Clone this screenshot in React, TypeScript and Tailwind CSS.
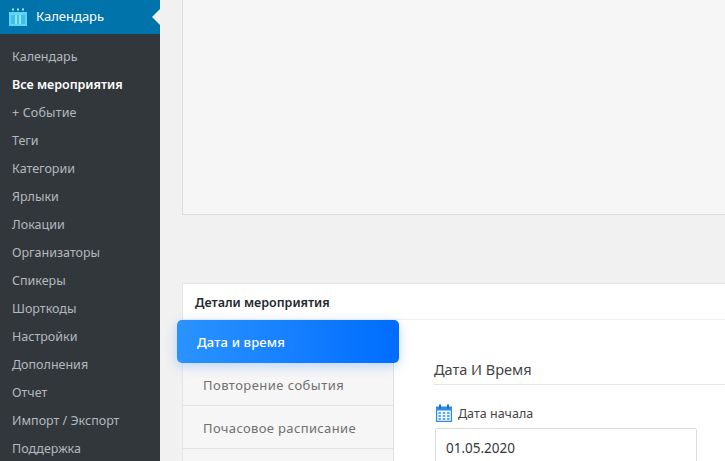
const items = ["Календарь","Все мероприятия","+ Событие","Теги","Категории","Ярлыки","Локации","Организаторы","Спикеры","Шорткоды","Настройки","Дополнения","Отчет","Импорт / Экспорт","Поддержка"];

export default function App() {
  return (
    <div className="flex h-[461px] w-[725px] overflow-hidden bg-[#f1f1f1] font-['Noto_Sans','Open_Sans',sans-serif]">
      <aside className="w-[160px] shrink-0 bg-[#32373c]">
        <div className="relative flex h-[34px] items-center bg-[#0073aa] pl-[9px] text-[13px] text-white">
          <svg width="18" height="18" viewBox="0 0 18 18" className="mr-[9px]">
            <path d="M0 4h18v14H0z" fill="#5fd4f4" />
            <path d="M3 0.5h2v2H3zM8 0.5h2v2H8zM13 0.5h2v2h-2z" fill="#a8e6f8" />
            <path d="M2 7h14v9H2z" fill="#3fbfe6" />
            <path d="M6 7h2v9H6zM10 7h2v9h-2z" fill="#8fe2f8" />
          </svg>
          <span>Календарь</span>
          <div className="absolute right-0 top-[9px] h-0 w-0 border-y-[8px] border-r-[8px] border-y-transparent border-r-[#f1f1f1]" />
        </div>
        <ul className="pt-[9px]">
          {items.map((t, i) => (
            <li key={i} className={`flex h-[28px] items-center whitespace-pre pl-[12px] text-[12.5px] ${i === 1 ? "font-semibold text-white" : "text-[#b4b9be]"} ${i === 2 ? "tracking-[0.15px]" : ""}`}>{t}</li>
          ))}
        </ul>
      </aside>
      <main className="min-w-0 flex-1 pl-[22px]">
        <div className="h-[215px] border-b border-l border-[#dcdcdc] bg-[#f6f6f6]" />
        <section className="mt-[68px] h-[300px] border-l border-t border-[#e5e5e5] bg-white">
          <div className="flex h-[36px] items-center border-b border-[#f0f0f0] pl-[12px] pt-[3px] text-[12.5px] font-semibold text-[#23282d]">Детали мероприятия</div>
          <div className="flex">
            <div className="w-[211px] shrink-0 border-r border-[#e2e2e2] bg-[#f6f6f6]">
              <div className="relative z-10 -ml-[6px] -mr-[6px] flex h-[43px] items-center rounded-[5px] bg-gradient-to-r from-[#2a93ff] to-[#006cff] pl-[20px] pt-[3px] text-[13px] font-medium tracking-[0.15px] text-white shadow-[0_3px_12px_rgba(0,108,255,0.25)]">Дата и время</div>
              <div className="flex h-[43px] items-center border-b border-[#e2e2e2] pl-[20px] pt-[3px] text-[13px] tracking-[0.45px] text-[#707070]">Повторение события</div>
              <div className="flex h-[43px] items-center border-b border-[#e2e2e2] pl-[20px] pt-[3px] text-[13px] tracking-[0.35px] text-[#707070]">Почасовое расписание</div>
              <div className="h-[43px]" />
            </div>
            <div className="min-w-0 flex-1 pl-[40px] pt-[37px]">
              <div className="flex h-[28px] items-start border-b border-[#e6e6e6] text-[14.5px] leading-[25px] text-[#444]">Дата И Время</div>
              <div className="mt-[19px] flex h-[18px] items-center pl-[2px] text-[12.5px] text-[#444]">
                <svg width="16" height="18" viewBox="0 0 16 18" className="mr-[6px] shrink-0">
                  <path d="M0 2.5h16V18H0z" fill="#2f8fe8" />
                  <path d="M1.2 6.5h13.6v10.3H1.2z" fill="#f0f7fe" />
                  <path d="M3 0.5h2v4H3zM11 0.5h2v4h-2z" fill="#1a6fc4" />
                  <path d="M2.5 8h2.4v2H2.5zM6.8 8h2.4v2H6.8zM11.1 8h2.4v2h-2.4zM2.5 11h2.4v2H2.5zM6.8 11h2.4v2H6.8zM11.1 11h2.4v2h-2.4zM2.5 14h2.4v2H2.5zM6.8 14h2.4v2H6.8zM11.1 14h2.4v2h-2.4z" fill="#5aa8ee" />
                </svg>
                <span className="translate-y-[1px]">Дата начала</span>
              </div>
              <div className="ml-[1px] mt-[6px] flex h-[40px] w-[262px] items-center rounded-[2px] border border-[#ddd] bg-white pl-[10px] text-[13.5px] text-[#32373c]">01.05.2020</div>
            </div>
          </div>
        </section>
      </main>
    </div>
  );
}
